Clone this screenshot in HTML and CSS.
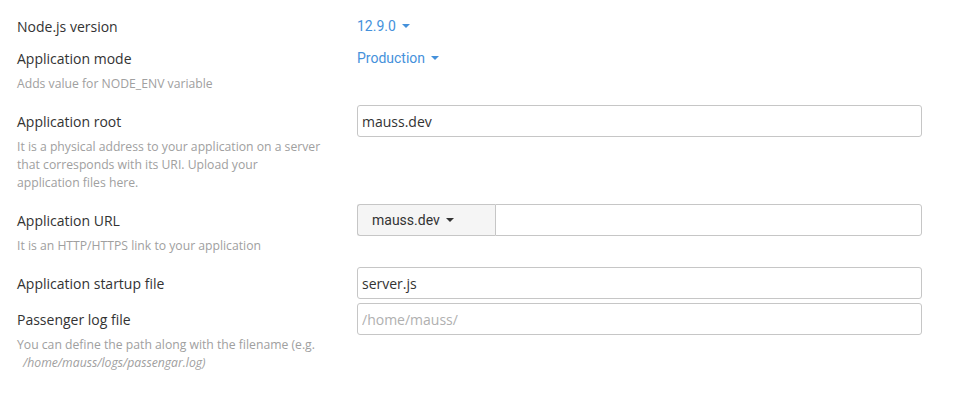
FILE: index.html
```html
<!DOCTYPE html>
<html lang="en">
<head>
  <meta charset="UTF-8" />
  <meta name="viewport" content="width=device-width, initial-scale=1.0"/>
  <title>Setup Node.js App</title>
  <link rel="stylesheet" href="styles.css">
</head>
<body>
  <div class="form">
    <div class="row row-tight">
      <div class="label-col">
        <div class="label">Node.js version</div>
      </div>
      <div class="control">
        <span class="dropdown">12.9.0 <span class="caret"></span></span>
      </div>
    </div>

    <div class="row">
      <div class="label-col">
        <div class="label">Application mode</div>
        <div class="help">Adds value for NODE_ENV variable</div>
      </div>
      <div class="control">
        <span class="dropdown">Production <span class="caret"></span></span>
      </div>
    </div>

    <div class="row">
      <div class="label-col">
        <div class="label">Application root</div>
        <div class="help">It is a physical address to your application on a server that corresponds with its URI. Upload your application files here.</div>
      </div>
      <div class="control">
        <input class="field" type="text" value="mauss.dev">
      </div>
    </div>

    <div class="row">
      <div class="label-col">
        <div class="label">Application URL</div>
        <div class="help">It is an HTTP/HTTPS link to your application</div>
      </div>
      <div class="control">
        <div class="input-group">
          <span class="addon">mauss.dev <span class="caret dark"></span></span>
          <input class="field grouped" type="text" value="">
        </div>
      </div>
    </div>

    <div class="row row-small">
      <div class="label-col">
        <div class="label">Application startup file</div>
      </div>
      <div class="control">
        <input class="field" type="text" value="server.js">
      </div>
    </div>

    <div class="row">
      <div class="label-col">
        <div class="label">Passenger log file</div>
        <div class="help">You can define the path along with the filename (e.g. <em class="path">/home/mauss/logs/passengar.log)</em></div>
      </div>
      <div class="control">
        <input class="field" type="text" placeholder="/home/mauss/">
      </div>
    </div>
  </div>
</body>
</html>
```

FILE: styles.css
```css
body {
  margin: 0;
  font-family: "Open Sans", sans-serif;
  background: #ffffff;
  color: #333333;
}

.form {
  padding: 10px 0 0 17px;
  width: 905px;
}

.row {
  display: grid;
  grid-template-columns: 310px 565px;
  column-gap: 30px;
  margin-bottom: 12px;
}

.row-tight {
  margin-bottom: 0;
}

.row-small {
  margin-bottom: 4px;
}

.label {
  font-size: 14px;
  line-height: 20px;
  padding-top: 7px;
  color: #333333;
}

.help {
  max-width: 305px;
  margin-top: 6px;
  font-size: 12.2px;
  line-height: 18px;
  color: #a0a0a0;
}

.help .path {
  margin-left: 6px;
}

.control {
  min-height: 32px;
}

.dropdown {
  display: inline-flex;
  align-items: center;
  height: 32px;
  font-family: Roboto, sans-serif;
  font-size: 14px;
  color: #4591db;
  cursor: pointer;
}

.caret {
  display: inline-block;
  margin-left: 6px;
  width: 0;
  height: 0;
  border-left: 4px solid transparent;
  border-right: 4px solid transparent;
  border-top: 4px solid #4591db;
}

.caret.dark {
  border-top-color: #333333;
}

.field {
  box-sizing: border-box;
  width: 100%;
  height: 32px;
  margin: 0;
  padding: 0 4px;
  font-family: "Open Sans", sans-serif;
  font-size: 14px;
  color: #333333;
  border: 1px solid #c6c6c6;
  border-radius: 3px;
  outline: none;
}

.field::placeholder {
  color: #b0b0b0;
}

.input-group {
  display: flex;
  height: 32px;
}

.addon {
  box-sizing: border-box;
  display: flex;
  align-items: center;
  width: 138px;
  padding-left: 14px;
  font-family: Roboto, sans-serif;
  font-size: 14px;
  color: #333333;
  background: #f5f5f5;
  border: 1px solid #c6c6c6;
  border-right: none;
  border-radius: 3px 0 0 3px;
}

.field.grouped {
  flex: 1;
  border-radius: 0 3px 3px 0;
}
```
